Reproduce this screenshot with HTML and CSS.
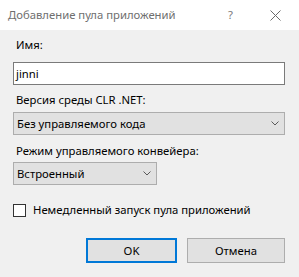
FILE: index.html
```html
<!DOCTYPE html>
<html lang="ru">
<head>
  <meta charset="UTF-8">
  <title>Добавление пула приложений</title>
  <link rel="stylesheet" href="styles.css">
</head>
<body>
  <div class="dialog">
    <div class="titlebar">
      <span class="title">Добавление пула приложений</span>
      <span class="help">?</span>
      <svg class="close" width="11" height="11" viewBox="0 0 11 11">
        <path d="M0.5 0.5 L10.5 10.5 M10.5 0.5 L0.5 10.5" stroke="#6b6b6b" stroke-width="1" fill="none"/>
      </svg>
    </div>
    <div class="content">
      <div class="label label-first">Имя:</div>
      <div class="textbox">jinni</div>

      <div class="label label-version">Версия среды CLR .NET:</div>
      <div class="combo wide">
        <span>Без управляемого кода</span>
        <svg class="chevron" width="8" height="5" viewBox="0 0 8 5">
          <path d="M0.5 0.5 L4 4 L7.5 0.5" stroke="#5a5a5a" stroke-width="1" fill="none"/>
        </svg>
      </div>

      <div class="label label-mode">Режим управляемого конвейера:</div>
      <div class="combo narrow">
        <span>Встроенный</span>
        <svg class="chevron" width="8" height="5" viewBox="0 0 8 5">
          <path d="M0.5 0.5 L4 4 L7.5 0.5" stroke="#5a5a5a" stroke-width="1" fill="none"/>
        </svg>
      </div>

      <div class="check-row">
        <span class="checkbox"></span>
        <span>Немедленный запуск пула приложений</span>
      </div>

      <div class="buttons">
        <button class="btn btn-default">OK</button>
        <button class="btn btn-cancel">Отмена</button>
      </div>
    </div>
  </div>
</body>
</html>
```

FILE: styles.css
```css
body {
  margin: 0;
  padding: 0;
  font-family: "Noto Sans", "Open Sans", sans-serif;
  font-size: 11.3px;
  color: #000;
  background-color: #f0f0f0;
}
.dialog {
  width: 299px;
  height: 277px;
  background-color: #f0f0f0;
}
.titlebar {
  height: 30px;
  background-color: #fff;
  display: flex;
  align-items: center;
  padding-left: 8px;
  box-sizing: border-box;
}
.title {
  color: #6f6f6f;
  width: 220px;
  line-height: 16px;
}
.help {
  color: #7a7a7a;
  width: 42px;
  line-height: 16px;
}
.close {
  display: block;
}
.content {
  padding: 0 14px 0 13px;
}
.label {
  line-height: 16px;
  padding-left: 3px;
}
.label-first {
  margin-top: 7px;
  margin-bottom: 9px;
}
.label-version {
  margin-top: 7px;
  margin-bottom: 4px;
}
.label-mode {
  margin-top: 8px;
  margin-bottom: 3px;
}
.textbox {
  height: 23px;
  box-sizing: border-box;
  border: 1px solid #7a7a7a;
  background-color: #fff;
  line-height: 21px;
  padding-left: 2px;
}
.combo {
  height: 23px;
  box-sizing: border-box;
  border: 1px solid #adadad;
  background-color: #e1e1e1;
  display: flex;
  align-items: center;
  justify-content: space-between;
  padding: 0 5px 0 3px;
  line-height: 21px;
}
.wide {
  width: 272px;
}
.narrow {
  width: 144px;
}
.check-row {
  display: flex;
  align-items: center;
  margin-top: 17px;
  line-height: 16px;
}
.checkbox {
  width: 13px;
  height: 13px;
  box-sizing: border-box;
  border: 1px solid #333;
  background-color: #fff;
  margin-right: 7px;
}
.buttons {
  display: flex;
  justify-content: flex-end;
  margin-top: 20px;
}
.btn {
  font-family: inherit;
  font-size: 11.3px;
  height: 25px;
  box-sizing: border-box;
  background-color: #e1e1e1;
  border: 1px solid #adadad;
  padding: 0;
  color: #000;
}
.btn-default {
  width: 91px;
  border: 2px solid #0078d7;
  margin-right: 10px;
}
.btn-cancel {
  width: 98px;
}
```
